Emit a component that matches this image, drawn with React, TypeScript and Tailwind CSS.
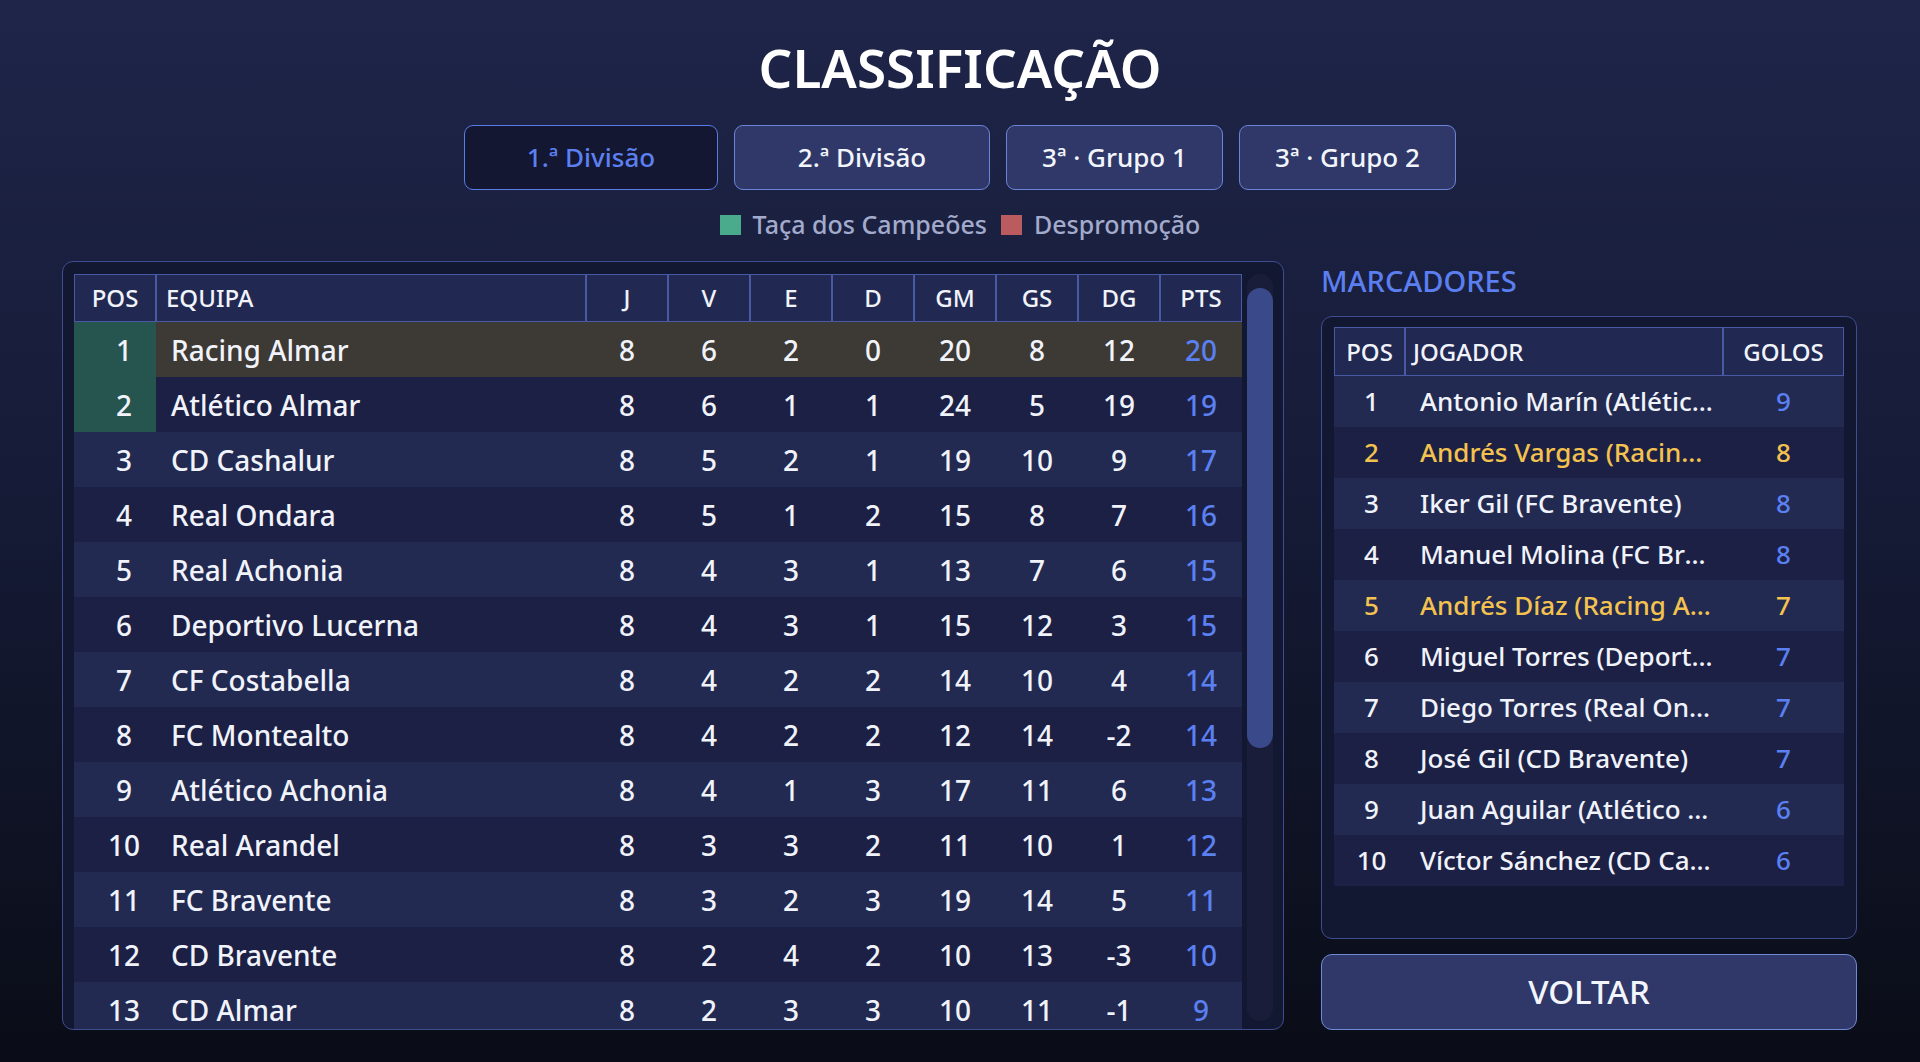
import React from "react";

type Team = {
  pos: number;
  name: string;
  j: number;
  v: number;
  e: number;
  d: number;
  gm: number;
  gs: number;
  dg: number;
  pts: number;
  zone?: "champions" | "relegation";
  mine?: boolean;
};

const teams: Team[] = [
  { pos: 1, name: "Racing Almar", j: 8, v: 6, e: 2, d: 0, gm: 20, gs: 8, dg: 12, pts: 20, zone: "champions", mine: true },
  { pos: 2, name: "Atlético Almar", j: 8, v: 6, e: 1, d: 1, gm: 24, gs: 5, dg: 19, pts: 19, zone: "champions" },
  { pos: 3, name: "CD Cashalur", j: 8, v: 5, e: 2, d: 1, gm: 19, gs: 10, dg: 9, pts: 17 },
  { pos: 4, name: "Real Ondara", j: 8, v: 5, e: 1, d: 2, gm: 15, gs: 8, dg: 7, pts: 16 },
  { pos: 5, name: "Real Achonia", j: 8, v: 4, e: 3, d: 1, gm: 13, gs: 7, dg: 6, pts: 15 },
  { pos: 6, name: "Deportivo Lucerna", j: 8, v: 4, e: 3, d: 1, gm: 15, gs: 12, dg: 3, pts: 15 },
  { pos: 7, name: "CF Costabella", j: 8, v: 4, e: 2, d: 2, gm: 14, gs: 10, dg: 4, pts: 14 },
  { pos: 8, name: "FC Montealto", j: 8, v: 4, e: 2, d: 2, gm: 12, gs: 14, dg: -2, pts: 14 },
  { pos: 9, name: "Atlético Achonia", j: 8, v: 4, e: 1, d: 3, gm: 17, gs: 11, dg: 6, pts: 13 },
  { pos: 10, name: "Real Arandel", j: 8, v: 3, e: 3, d: 2, gm: 11, gs: 10, dg: 1, pts: 12 },
  { pos: 11, name: "FC Bravente", j: 8, v: 3, e: 2, d: 3, gm: 19, gs: 14, dg: 5, pts: 11 },
  { pos: 12, name: "CD Bravente", j: 8, v: 2, e: 4, d: 2, gm: 10, gs: 13, dg: -3, pts: 10 },
  { pos: 13, name: "CD Almar", j: 8, v: 2, e: 3, d: 3, gm: 10, gs: 11, dg: -1, pts: 9 },
  { pos: 14, name: "Real Montealto", j: 8, v: 1, e: 4, d: 3, gm: 8, gs: 13, dg: -5, pts: 7 },
  { pos: 15, name: "CF Lucerna", j: 8, v: 1, e: 2, d: 5, gm: 7, gs: 17, dg: -10, pts: 5, zone: "relegation" },
  { pos: 16, name: "Atlético Ondara", j: 8, v: 0, e: 2, d: 6, gm: 5, gs: 22, dg: -17, pts: 2, zone: "relegation" },
];

type Scorer = { pos: number; name: string; goals: number; mine?: boolean };

const scorers: Scorer[] = [
  { pos: 1, name: "Antonio Marín (Atlético Almar)", goals: 9 },
  { pos: 2, name: "Andrés Vargas (Racing Almar)", goals: 8, mine: true },
  { pos: 3, name: "Iker Gil (FC Bravente)", goals: 8 },
  { pos: 4, name: "Manuel Molina (FC Bravente)", goals: 8 },
  { pos: 5, name: "Andrés Díaz (Racing Almar)", goals: 7, mine: true },
  { pos: 6, name: "Miguel Torres (Deportivo Lucerna)", goals: 7 },
  { pos: 7, name: "Diego Torres (Real Ondara)", goals: 7 },
  { pos: 8, name: "José Gil (CD Bravente)", goals: 7 },
  { pos: 9, name: "Juan Aguilar (Atlético Achonia)", goals: 6 },
  { pos: 10, name: "Víctor Sánchez (CD Cashalur)", goals: 6 },
];

const tabs = [
  { label: "1.ª Divisão", w: "w-[254px]", active: true },
  { label: "2.ª Divisão", w: "w-[256px]", active: false },
  { label: "3ª · Grupo 1", w: "w-[217px]", active: false },
  { label: "3ª · Grupo 2", w: "w-[217px]", active: false },
];

const statCols = ["J", "V", "E", "D", "GM", "GS", "DG", "PTS"];

function HeadCell({ children, className = "" }: { children: React.ReactNode; className?: string }) {
  return (
    <div className={`flex items-center border border-[#4a59a3] text-[24px] font-medium text-[#f1f3fb] ${className}`}>
      {children}
    </div>
  );
}

function StandingsRow({ t, index }: { t: Team; index: number }) {
  const stripe = index % 2 === 0 ? "bg-[#222a51]" : "bg-[#1c2044]";
  const rowBg = t.mine ? "bg-[#3d3934]" : stripe;
  const posBg =
    t.zone === "champions" ? "bg-[#26554f]" : t.zone === "relegation" ? "bg-[#5a2f3c]" : "";
  const stats = [t.j, t.v, t.e, t.d, t.gm, t.gs, t.dg];
  return (
    <div className={`flex h-[55px] shrink-0 items-center text-[28px] font-medium text-[#f1f3fb] ${rowBg}`}>
      <div className={`flex h-full w-[82px] items-center justify-center pl-[18px] ${posBg}`}>{t.pos}</div>
      <div className="flex-1 truncate pl-[15px]">{t.name}</div>
      {stats.map((s, i) => (
        <div key={i} className="w-[82px] text-center">
          {s}
        </div>
      ))}
      <div className="w-[82px] text-center text-[#5b80f2]">{t.pts}</div>
    </div>
  );
}

function ScorerRow({ s, index }: { s: Scorer; index: number }) {
  const stripe = index % 2 === 0 ? "bg-[#222a51]" : "bg-[#1c2044]";
  const txt = s.mine ? "text-[#f3c24f]" : "text-[#f1f3fb]";
  const goal = s.mine ? "text-[#f3c24f]" : "text-[#5b80f2]";
  return (
    <div className={`flex h-[51px] shrink-0 items-center text-[26px] font-medium ${stripe} ${txt}`}>
      <div className="w-[71px] pl-[4px] text-center">{s.pos}</div>
      <div className="w-[318px] truncate pl-[15px] pr-[9px]">{s.name}</div>
      <div className={`w-[121px] text-center ${goal}`}>{s.goals}</div>
    </div>
  );
}

export default function App() {
  return (
    <div className="flex h-[1062px] w-full flex-col items-center bg-gradient-to-b from-[#1f2549] via-[#151a35] to-[#0a0d17] pt-[41px] font-['Noto_Sans',sans-serif] text-white">
      <h1 className="h-[54px] text-[53px] font-semibold leading-[54px] text-white">CLASSIFICAÇÃO</h1>

      <div className="mt-[30px] flex h-[65px] gap-4">
        {tabs.map((t) => (
          <button
            key={t.label}
            className={`${t.w} h-full rounded-[9px] border text-[26px] font-medium ${
              t.active
                ? "border-[#5a7ae6] bg-[#131731] text-[#5d80f0]"
                : "border-[#6c84d8] bg-[#2f3868] text-[#f3f5fc]"
            }`}
          >
            {t.label}
          </button>
        ))}
      </div>

      <div className="mt-[23px] flex h-[24px] items-center text-[25px] font-medium text-[#a3abcc]">
        <span className="h-[20px] w-[21px] bg-[#4aab8c]" />
        <span className="ml-[12px]">Taça dos Campeões</span>
        <span className="ml-[14px] h-[20px] w-[21px] bg-[#b95b5f]" />
        <span className="ml-[12px]">Despromoção</span>
      </div>

      <div className="mt-[24px] flex h-[769px] w-full gap-[37px] pl-[62px] pr-[63px]">
        {/* standings panel */}
        <div className="flex min-w-0 flex-1 rounded-[11px] border border-[#3f4c8e] bg-[#131832] pl-[11px] pr-[10px] pt-[12px]">
          <div className="flex min-w-0 flex-1 flex-col overflow-hidden">
            <div className="flex h-[48px] shrink-0 bg-[#212952]">
              <HeadCell className="w-[82px] justify-center">POS</HeadCell>
              <HeadCell className="flex-1 pl-[9px]">EQUIPA</HeadCell>
              {statCols.map((c) => (
                <HeadCell key={c} className="w-[82px] justify-center">
                  {c}
                </HeadCell>
              ))}
            </div>
            {teams.map((t, i) => (
              <StandingsRow key={t.pos} t={t} index={i} />
            ))}
          </div>
          {/* scrollbar */}
          <div className="mb-[8px] ml-[5px] w-[26px] rounded-full bg-[#191d3a]">
            <div className="mt-[14px] h-[460px] w-full rounded-full bg-[#3a4989]" />
          </div>
        </div>

        {/* scorers column */}
        <div className="flex w-[536px] shrink-0 flex-col">
          <h2 className="h-[40px] text-[29px] font-medium leading-[40px] text-[#5b7ff0]">MARCADORES</h2>
          <div className="mt-[15px] flex-1 rounded-[11px] border border-[#3f4c8e] bg-[#131832] px-[12px] pt-[10px]">
            <div className="flex h-[49px] bg-[#212952]">
              <HeadCell className="w-[71px] justify-center">POS</HeadCell>
              <HeadCell className="w-[318px] pl-[7px]">JOGADOR</HeadCell>
              <HeadCell className="w-[121px] justify-center">GOLOS</HeadCell>
            </div>
            {scorers.map((s, i) => (
              <ScorerRow key={s.pos} s={s} index={i} />
            ))}
          </div>
          <button className="mt-[15px] h-[76px] shrink-0 rounded-[11px] border border-[#7088d8] bg-[#2f3868] text-[33px] font-medium text-[#f3f5fc]">
            VOLTAR
          </button>
        </div>
      </div>
    </div>
  );
}
